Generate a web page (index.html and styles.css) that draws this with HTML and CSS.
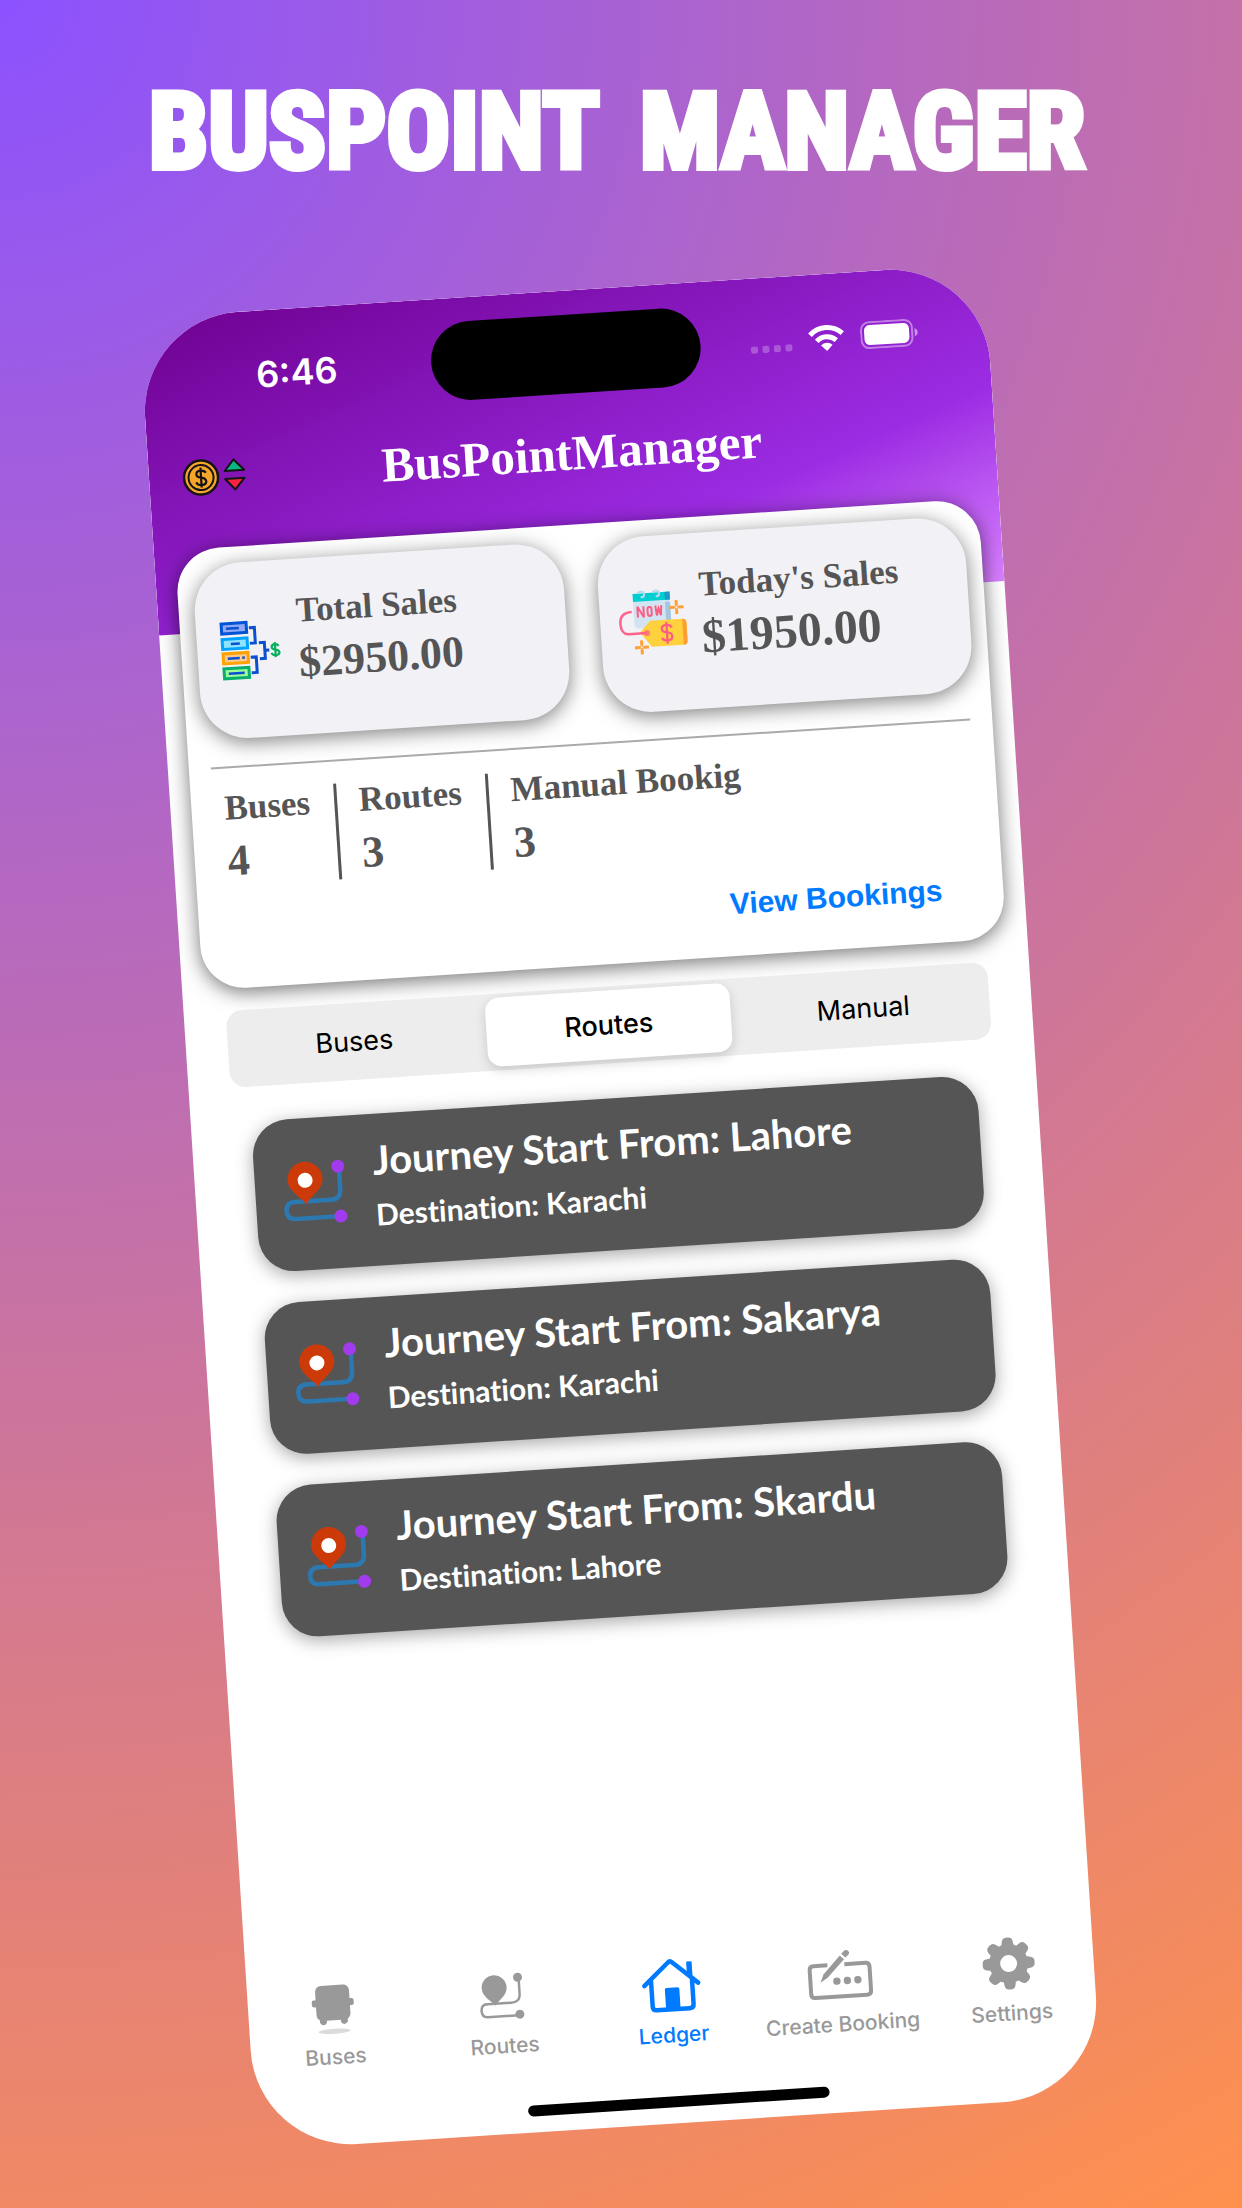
FILE: index.html
```html
<!DOCTYPE html>
<html lang="en">
<head>
<meta charset="utf-8">
<meta name="viewport" content="width=device-width, initial-scale=1">
<title>BusPoint Manager</title>
<link rel="stylesheet" href="styles.css">
</head>
<body>
<svg class="sprite" aria-hidden="true">
  <symbol id="route" viewBox="0 0 70 70">
    <path d="M26 46H50Q60 46 60 36V12M26 46H14Q5 46 5 54.500T14 63H58" fill="none" stroke="#2c78b0" stroke-width="4.500"/>
    <path d="M25 49C21 42 8 35 8 24A17.500 17.500 0 0 1 43 24C43 35 29 42 25 49Z" fill="#cd3a09"/>
    <circle cx="25.500" cy="25" r="7.500" fill="#fff"/>
    <circle cx="59" cy="13" r="6.500" fill="#a23aee"/>
    <circle cx="59" cy="63" r="6.500" fill="#a23aee"/>
  </symbol>
</svg>
<h1 class="poster-title"><span>BUSPOINT</span> <span>MANAGER</span></h1>
<main class="phone">
  <header class="header">
    <div class="status">
      <span class="time">6:46</span>
      <span class="island"></span>
      <span class="status-icons">
        <svg width="42" height="26" viewBox="0 0 42 26" fill="#fff" fill-opacity=".25"><rect y="17" width="7" height="7" rx="2"/><rect x="11.500" y="17" width="7" height="7" rx="2"/><rect x="23" y="17" width="7" height="7" rx="2"/><rect x="34.500" y="17" width="7" height="7" rx="2"/></svg>
        <svg width="36" height="26" viewBox="0 0 36 26" fill="none" stroke="#fff" stroke-width="5"><path d="M1.800 9.300A23 23 0 0 1 34.200 9.300"/><path d="M8.200 15.800A14 14 0 0 1 27.800 15.800"/><path d="M18 26L12.200 20.300A8.200 8.200 0 0 1 23.800 20.300Z" fill="#fff" stroke="none"/></svg>
        <svg width="58" height="28" viewBox="0 0 58 28"><rect x="1" y="1" width="51" height="26" rx="8" fill="none" stroke="#fff" stroke-opacity=".42" stroke-width="2"/><rect x="4" y="4" width="45" height="20" rx="5.500" fill="#fff"/><path d="M54.500 10Q57.500 11 57.500 14T54.500 18Z" fill="#fff" fill-opacity=".5"/></svg>
      </span>
    </div>
    <div class="nav-row">
      <button class="currency" type="button" aria-label="Currency">
        <svg width="64" height="38" viewBox="0 0 64 38">
          <circle cx="19" cy="19" r="17" fill="#f7a62c" stroke="#141414" stroke-width="2.500"/>
          <circle cx="19" cy="19" r="12.500" fill="none" stroke="#141414" stroke-width="2"/>
          <path d="M24 14.500Q23 12 19 12Q14.500 12 14.500 15.500Q14.500 18.500 19 19T24 23Q24 26.500 19 26.500Q14.500 26.500 14 23.500M19 9V29" fill="none" stroke="#141414" stroke-width="2.200"/>
          <path d="M43 14L52.500 3L62.500 14Z" fill="#08b583" stroke="#141414" stroke-width="2" stroke-linejoin="round"/>
          <path d="M43 22H62.500L52.500 33Z" fill="#fb2140" stroke="#141414" stroke-width="2" stroke-linejoin="round"/>
        </svg>
      </button>
      <h2 class="app-name">BusPointManager</h2>
    </div>
  </header>

  <section class="summary">
    <div class="sales">
      <article class="sale">
        <svg width="70" height="70" viewBox="0 0 70 70" fill="none">
          <g stroke-width="3">
            <rect x="7.500" y="7.500" width="25" height="10" fill="#91a9f5" stroke="#0052d6"/>
            <rect x="7.500" y="23" width="25" height="10" fill="#8ee4ff" stroke="#00a2ff"/>
            <rect x="7.500" y="37.500" width="25" height="10" fill="#ffc98c" stroke="#ffa200"/>
            <rect x="7.500" y="52.500" width="25" height="10" fill="#9bfb9b" stroke="#08ae6b"/>
          </g>
          <path d="M12 12.500H25M16 28H25M12 42.500H24M26.500 42.500H29M12 57.500H28" stroke="#0b50cf" stroke-width="2.500"/>
          <path d="M35 13H40.500V28.500H35M35 42.500H40.500V58H35M44 28.500H49.500V44.500H44M49.500 36.500H54" stroke="#0b50cf" stroke-width="3"/>
          <path d="M63.500 33Q62.500 31 60 31Q56.500 31 56.500 33.700Q56.500 36 60 36.500T64 39.500Q64 42 60 42Q57 42 56 39.500M60 29V44" stroke="#08ae5e" stroke-width="2.200"/>
        </svg>
        <div class="sale-text"><h3 class="label">Total Sales</h3><p class="amount">$2950.00</p></div>
      </article>
      <article class="sale">
        <svg width="70" height="70" viewBox="0 0 70 70" fill="none">
          <path d="M16 10H52V34Q52 39 47 39H21Q16 39 16 34Z" fill="#d2e3f2"/>
          <path d="M48 14H53V34L48 38Z" fill="#a5c4e0"/>
          <path d="M16 4H53V12H16Z" fill="#00cfd2"/><path d="M48 4H53V12H48Z" fill="#1d99c8"/>
          <path d="M21 4Q23 1 27 3Q29 8 24 8M36 4Q38 1 42 3Q44 8 39 8" stroke="#bcd8ee" stroke-width="2.200"/>
          <path d="M20 28V17L26 28V17M30 20Q30 18 32 18T34 20V25Q34 27 32 27T30 25ZM38 17L39 27L41 20L43 27L44 17" stroke="#ff5c84" stroke-width="2"/>
          <path d="M21 43L32 32H64Q68 32 68 36V54Q68 58 64 58H32Z" fill="#ffd13c"/>
          <path d="M64 32Q68 32 68 36V54Q68 58 64 58Z" fill="#ff9d32"/>
          <circle cx="28" cy="44" r="3" fill="#ff7d6e"/>
          <path d="M28 44H10Q2 44 2 33T14 22" stroke="#ff6389" stroke-width="2.500"/>
          <path d="M53 40Q52 37 48 37Q43 37 43 41Q43 44 48 44.500T53 49Q53 52.500 48 52.500Q43 52.500 43 49.500M48 34V56" stroke="#ff5c84" stroke-width="2.200"/>
          <path d="M59 13V18M59 22V27M52 20H57M61 20H66M22 51V56M22 60V65M15 58H20M24 58H29" stroke="#ffa032" stroke-width="3"/>
          <path d="M57 20L59 22L61 20L59 18ZM20 58L22 60L24 58L22 56Z" stroke="#ffa032"/>
        </svg>
        <div class="sale-text"><h3 class="label">Today's Sales</h3><p class="amount amount-large">$1950.00</p></div>
      </article>
    </div>
    <dl class="counts">
      <div class="count"><dt class="label">Buses</dt><dd class="amount">4</dd></div>
      <div class="count"><dt class="label">Routes</dt><dd class="amount">3</dd></div>
      <div class="count"><dt class="label">Manual Bookig</dt><dd class="amount">3</dd></div>
    </dl>
    <a class="view" href="#bookings">View Bookings</a>
  </section>

  <div class="segments">
    <button class="segment" type="button">Buses</button>
    <button class="segment selected" type="button" aria-pressed="true">Routes</button>
    <button class="segment" type="button">Manual</button>
  </div>

  <ul class="routes">
    <li class="route"><svg class="route-icon"><use href="#route"/></svg><div><h3 class="from">Journey Start From: Lahore</h3><p class="to">Destination: Karachi</p></div></li>
    <li class="route"><svg class="route-icon"><use href="#route"/></svg><div><h3 class="from">Journey Start From: Sakarya</h3><p class="to">Destination: Karachi</p></div></li>
    <li class="route"><svg class="route-icon"><use href="#route"/></svg><div><h3 class="from">Journey Start From: Skardu</h3><p class="to">Destination: Lahore</p></div></li>
  </ul>

  <nav class="tabs">
    <a class="tab" href="#buses">
      <svg width="60" height="60" viewBox="0 0 60 60" fill="currentColor"><rect x="13" y="8" width="34" height="35" rx="6"/><rect x="9" y="22" width="42" height="7" rx="2"/><path d="M16 42H23V45Q19.500 50 16 45ZM37 42H44V45Q40.500 50 37 45Z"/><ellipse cx="30" cy="54" rx="16" ry="2.500" opacity=".35"/></svg>
      Buses</a>
    <a class="tab" href="#routes">
      <svg width="60" height="60" viewBox="0 0 60 60" fill="currentColor"><path d="M23 37H39Q48 37 48 29V13M23 37H15Q9 37 9 43.500T15 50H46" fill="none" stroke="currentColor" stroke-width="2.500"/><path d="M23 39C20 34 10.500 30 10.500 21A12.500 12.500 0 0 1 35.500 21C35.500 30 26 34 23 39Z"/><circle cx="47" cy="12" r="4.500"/><circle cx="47" cy="49" r="4.500"/></svg>
      Routes</a>
    <a class="tab current" href="#ledger" aria-current="page">
      <svg width="60" height="60" viewBox="0 0 60 60" fill="none" stroke="currentColor" stroke-width="4.500" stroke-linecap="round" stroke-linejoin="round"><path d="M3 29L28 7Q30 5 32 7L57 29M10 25V50Q10 54 14 54H47Q51 54 51 50V25"/><path d="M24 54V34Q24 33 25 33H36Q37 33 37 34V54ZM47 8H51V22L47 19Z" fill="currentColor" stroke-width="1.500"/></svg>
      Ledger</a>
    <a class="tab" href="#booking">
      <svg width="66" height="60" viewBox="0 0 66 60" fill="none" stroke="currentColor" stroke-width="4"><path d="M21 20H7Q3 20 3 24V48Q3 52 7 52H59Q63 52 63 48V24Q63 20 59 20H38"/><path d="M13 37L16.500 29L34 11L38 15L20.500 32.500Z" fill="currentColor" stroke="none"/><path d="M35.500 9.500L38 7Q40.500 5 42.500 7T42.500 11L39.500 13.500Z" fill="currentColor" stroke="none"/><g fill="currentColor" stroke="none"><circle cx="29.500" cy="36.500" r="3.700"/><circle cx="40" cy="36.500" r="3.700"/><circle cx="50.500" cy="36.500" r="3.700"/></g></svg>
      Create Booking</a>
    <a class="tab" href="#settings">
      <svg width="60" height="60" viewBox="0 0 60 60" fill="none" stroke="currentColor"><circle cx="30" cy="30" r="14" stroke-width="11"/><g stroke-width="9" stroke-linejoin="round"><path id="tooth" d="M28.500 11.500L29 8.500H31L31.500 11.500Z"/><use href="#tooth" transform="rotate(45 30 30)"/><use href="#tooth" transform="rotate(90 30 30)"/><use href="#tooth" transform="rotate(135 30 30)"/><use href="#tooth" transform="rotate(180 30 30)"/><use href="#tooth" transform="rotate(225 30 30)"/><use href="#tooth" transform="rotate(270 30 30)"/><use href="#tooth" transform="rotate(315 30 30)"/></g></svg>
      Settings</a>
  </nav>
  <div class="home-bar"></div>
</main>
</body>
</html>
```
FILE: styles.css
```css
* { box-sizing: border-box; margin: 0; padding: 0; }

body {
  display: flex;
  flex-direction: column;
  align-items: center;
  min-height: 100vh;
  padding: 72px 0 80px;
  overflow-x: hidden;
  background: radial-gradient(circle farthest-corner at 0 0, #8c52ff, #ff914d);
  font-family: Inter, "Liberation Sans", sans-serif;
}

button { border: 0; background: none; font: inherit; cursor: pointer; }
a { text-decoration: none; }
.sprite { display: none; }

.poster-title {
  display: flex;
  flex-wrap: wrap;
  justify-content: center;
  gap: 0 40px;
  margin-bottom: 97px;
  padding-right: 8px;
  color: #fff;
  font: 700 106px/120px "Liberation Sans Narrow", "Roboto Condensed", "Open Sans Condensed", "Liberation Sans", sans-serif;
  -webkit-text-stroke: 6px #fff;
}

.phone {
  display: flex;
  flex-direction: column;
  width: 68.2%;
  aspect-ratio: 430 / 932;
  overflow: hidden;
  border-radius: 100px;
  background: #fff;
  transform: rotate(-3.7deg);
}

/* Header */
.header {
  padding: 24px 0 127px;
  background: linear-gradient(to bottom right, #6f0192, #9c2ce3 69%, #d880ff);
  color: #fff;
}
.status {
  display: grid;
  grid-template-columns: 1fr 270px 1fr;
  align-items: center;
}
.time {
  padding-left: 20px;
  font-size: 36px;
  font-weight: 600;
  line-height: 44px;
  text-align: center;
}
.island { height: 79px; border-radius: 40px; background: #000; }
.status-icons {
  display: flex;
  justify-content: flex-end;
  align-items: center;
  gap: 16px;
  padding-right: 70px;
}
.nav-row {
  display: grid;
  grid-template-columns: 1fr auto 1fr;
  align-items: center;
  margin-top: 32px;
}
.currency { display: flex; padding-left: 33px; }
.app-name { font: bold 49px/56px "Liberation Serif", serif; }

/* Summary card */
.summary {
  display: flex;
  flex-direction: column;
  margin: -84px 21px 0;
  padding: 16px 16px 34px;
  border-radius: 44px;
  background: #fff;
  box-shadow: 0 4px 20px rgba(0, 0, 0, .55);
  color: #555;
}
.sales { display: grid; grid-template-columns: 1fr 1fr; gap: 34px; }
.sale {
  display: flex;
  align-items: center;
  gap: 13px;
  min-height: 176px;
  padding: 0 18px;
  border-radius: 48px;
  background: #f2f1f6;
  box-shadow: 0 4px 20px rgba(0, 0, 0, .5);
}
.sale-text { padding-bottom: 12px; }
.label { font: bold 35px/44px "Liberation Serif", serif; }
.amount { font: bold 44px/60px "Liberation Serif", serif; }
.amount-large { font-size: 48px; }
.counts {
  display: flex;
  margin: 27px 6px 0;
  padding: 22px 0 0 11px;
  border-top: 2px solid #aaa;
}
.count { padding-right: 24px; }
.count + .count { padding-left: 22px; border-left: 3px solid #555; }
.count .label { line-height: 36px; }
.count .amount { margin-top: 10px; line-height: 50px; }
.view {
  align-self: flex-end;
  margin: 32px 45px 0 0;
  color: #007aff;
  font: bold 30px/36px "Liberation Sans", sans-serif;
}

/* Segmented control */
.segments {
  display: grid;
  grid-template-columns: repeat(3, 1fr);
  gap: 10px;
  margin: 22px 42px 0;
  padding: 4px;
  border-radius: 16px;
  background: #ededed;
}
.segment {
  border-radius: 14px;
  color: #000;
  font-size: 27px;
  line-height: 69px;
}
.selected {
  background: #fff;
  box-shadow: 0 4px 12px rgba(0, 0, 0, .16);
  font-weight: 500;
}

/* Routes */
.routes {
  display: flex;
  flex-direction: column;
  gap: 31px;
  margin: 35px 60px 0;
  list-style: none;
}
.route {
  display: flex;
  align-items: center;
  gap: 24px;
  min-height: 152px;
  padding: 16px 25px 28px;
  border-radius: 36px;
  background: #555;
  box-shadow: 0 4px 18px rgba(0, 0, 0, .35);
  color: #fff;
  font-family: Lato, sans-serif;
  font-variant-ligatures: none;
}
.route-icon { width: 70px; height: 70px; margin-top: 4px; }
.from { font-size: 40px; font-weight: 700; line-height: 48px; }
.to { margin-top: 12px; font-size: 30px; font-weight: 700; line-height: 36px; }

/* Tab bar */
.tabs {
  display: grid;
  grid-template-columns: repeat(5, 1fr);
  margin-top: auto;
}
.tab {
  display: flex;
  flex-direction: column;
  align-items: center;
  gap: 7px;
  color: #999;
  font-size: 21px;
  font-weight: 500;
  line-height: 26px;
  white-space: nowrap;
}
.current { color: #007aff; }
.home-bar {
  align-self: center;
  width: 302px;
  height: 11px;
  margin: 48px 0 16px;
  border-radius: 6px;
  background: #000;
}
```
